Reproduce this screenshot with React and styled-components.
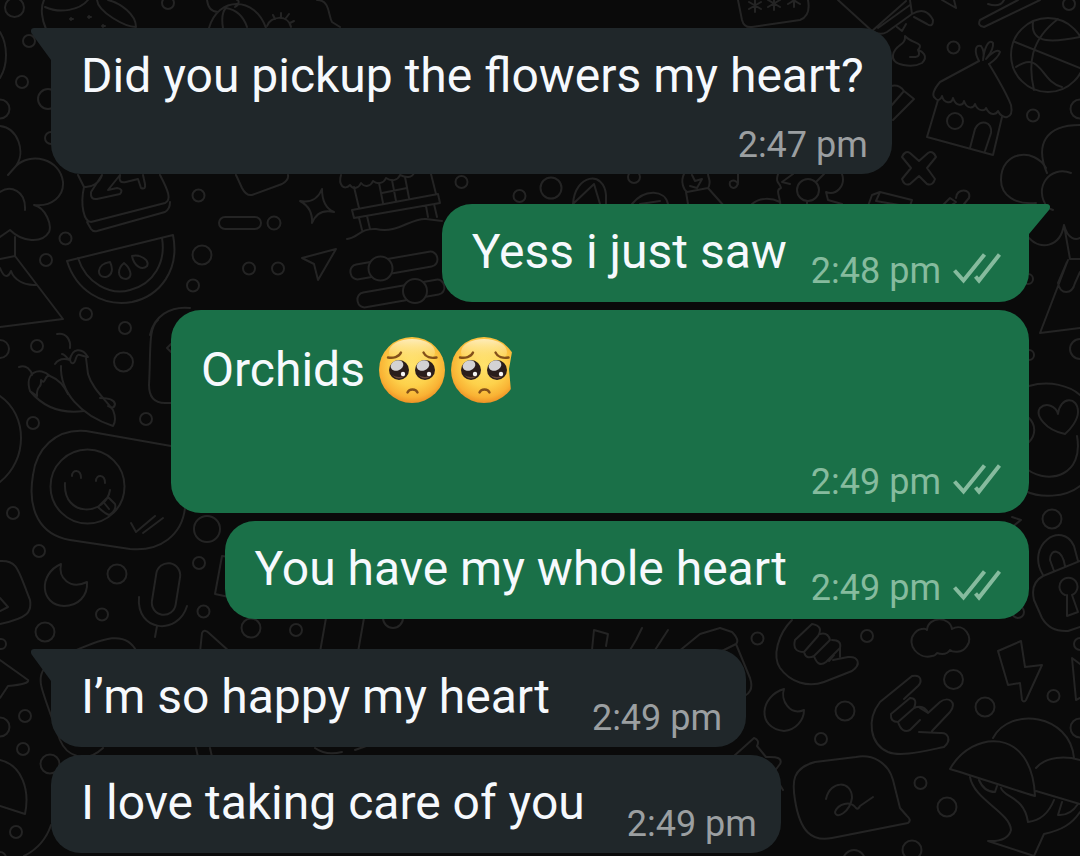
import React, { memo } from "react"
import styled, { createGlobalStyle } from "styled-components"

const palette = {
  page: "#0a0a0a",
  doodle: "#242424",
  incoming: "#20272a",
  outgoing: "#1a7048",
  text: "#f6f9fd",
  metaIn: "#9b9fa1",
  metaOut: "#86bb9e",
}

const GlobalStyle = createGlobalStyle`
  body {
    margin: 0;
    background: ${palette.page};
    font-family: Roboto, "Noto Sans", sans-serif;
  }
`

const Page = styled.main`
  position: relative;
  min-height: 100vh;
  box-sizing: border-box;
  padding: 28px 51px 2px;
  overflow: hidden;
`

const Wallpaper = styled.svg`
  position: absolute;
  top: 0;
  left: 0;
  width: 100%;
  height: 100%;
  fill: none;
  stroke: ${palette.doodle};
  stroke-width: 2;
  stroke-linecap: round;
  stroke-linejoin: round;
`

const Thread = styled.div`
  position: relative;
  display: flex;
  flex-direction: column;
  gap: 30px;
`

const Group = styled.ul`
  display: flex;
  flex-direction: column;
  align-items: ${(props) => (props.$mine ? "flex-end" : "flex-start")};
  gap: 8px;
  margin: 0;
  padding: 0;
  list-style: none;
`

const Bubble = styled.li`
  position: relative;
  display: flex;
  flex-direction: ${(props) => (props.$stacked ? "column" : "row")};
  justify-content: space-between;
  column-gap: ${(props) => (props.$mine ? 24 : 42)}px;
  row-gap: 6px;
  box-sizing: border-box;
  width: ${(props) => (props.$wide ? "100%" : "auto")};
  max-width: 858px;
  min-height: ${(props) => (props.$wide ? 203 : 98)}px;
  padding: 20px ${(props) => (props.$mine ? 28 : 24)}px 8px 30px;
  border-radius: 30px;
  border-top-left-radius: ${(props) => (props.$tail && !props.$mine ? 0 : 30)}px;
  border-top-right-radius: ${(props) => (props.$tail && props.$mine ? 0 : 30)}px;
  background: ${(props) => (props.$mine ? palette.outgoing : palette.incoming)};
`

const Tail = styled.svg`
  position: absolute;
  top: 0;
  width: 22px;
  height: 34px;
  ${(props) => (props.$mine ? "left: 100%; margin-left: -1px;" : "right: 100%; margin-right: -1px;")}
  fill: ${(props) => (props.$mine ? palette.outgoing : palette.incoming)};
`

const Text = styled.p`
  display: flex;
  align-items: center;
  margin: 0;
  padding-right: ${(props) => (props.$stacked ? 4 : 0)}px;
  padding-bottom: 14px;
  height: ${(props) => (props.$tall ? 80 : 56)}px;
  font-size: 48px;
  line-height: 56px;
  color: ${palette.text};
  white-space: pre;
`

const Emojis = styled.span`
  display: flex;
  gap: 6px;
  margin-left: 14px;
`

const Meta = styled.div`
  display: flex;
  align-items: center;
  gap: 12px;
  align-self: flex-end;
  padding-bottom: ${(props) => (props.$mine ? 2 : 0)}px;
  font-size: 36px;
  line-height: 42px;
  color: ${(props) => (props.$mine ? palette.metaOut : palette.metaIn)};
  white-space: nowrap;
`

const Ticks = styled.svg`
  width: 48px;
  height: 36px;
  fill: none;
  stroke: currentColor;
  stroke-width: 4;
`

const Face = styled.svg`
  width: 66px;
  height: 66px;
`

function PleadingFace({ id, cut }) {
  return (
    <Face viewBox="0 0 66 66" role="img" aria-label="pleading face">
      <defs>
        <radialGradient id={`skin-${id}`} cx="0.5" cy="0.42" r="0.58">
          <stop offset="0" stopColor="#ffe36c" />
          <stop offset="0.55" stopColor="#fdd14b" />
          <stop offset="0.85" stopColor="#f9b234" />
          <stop offset="1" stopColor="#ee9226" />
        </radialGradient>
        <linearGradient id={`shine-${id}`} x1="0" y1="0" x2="0" y2="1">
          <stop offset="0" stopColor="#fff6d8" stopOpacity="0.8" />
          <stop offset="1" stopColor="#ffe27a" stopOpacity="0" />
        </linearGradient>
        <clipPath id={`cut-${id}`}>
          <path d={cut ? "M0 0H66L61 15L58 32L60 54L60 66H0Z" : "M0 0H66V66H0Z"} />
        </clipPath>
      </defs>
      <g clipPath={`url(#cut-${id})`}>
        <circle cx="33" cy="33" r="33" fill={`url(#skin-${id})`} />
        <ellipse cx="33" cy="15" rx="23" ry="13" fill={`url(#shine-${id})`} />
        <g fill="none" stroke="#83501a" strokeWidth="2.4" strokeLinecap="round">
          <path d="M9 20.500C14 21.500 20 20 22 15.500" />
          <path d="M44.500 15.500C46.500 20 52 21.500 57.500 20.500" />
          <path d="M28.500 55.500C30 51.500 37 51.500 38.500 55.500" />
        </g>
        {[20, 46].map((x) => (
          <g key={x}>
            <circle cx={x} cy="33" r="10" fill="#2a1d1b" />
            <path d={`M${x - 7} 38Q${x} 45 ${x + 7} 38Q${x} 42 ${x - 7} 38Z`} fill="#6b4a3c" />
            <ellipse
              cx={x - 2}
              cy="28.500"
              rx="6.500"
              ry="5"
              fill="#d3d2d4"
              transform={`rotate(-20 ${x - 2} 28.500)`}
            />
            <circle cx={x + 4} cy="37" r="2.200" fill="#f6f6f6" />
          </g>
        ))}
      </g>
    </Face>
  )
}

// [cx, cy, r]
const bubbles = [
  [14.5, 7.5, 9.5], [168, 3, 6], [29, 41, 6], [22, 82, 6], [0, 109, 9.5], [51, 138, 6], [48, 99, 10],
  [198.5, 195.5, 6], [65.5, 238.5, 6], [46, 260, 6], [202, 255, 9.5], [193, 285.5, 6],
  [86, 314, 6], [125, 328, 6], [249, 268.5, 6], [278, 268.5, 6], [274, 223, 6.5],
  [0, 349, 9], [37, 346, 6], [123.5, 362, 9.5], [33, 423, 6], [146, 419, 6], [13, 513, 6],
  [39, 551, 6], [207, 529, 13], [117, 574, 9.5], [199, 563, 6], [203.5, 611.5, 6],
  [102, 614.5, 6], [45, 632, 9.5], [1, 644, 5], [251, 628, 9.5], [296, 630, 6],
  [393, 618, 10], [25, 716, 6], [0, 727, 9.5], [23, 749, 6], [50, 764, 9.5], [16, 832, 6],
  [0, 858, 6], [461.5, 182, 6], [519.5, 196, 6], [551, 188, 10.5], [634, 177, 6],
  [953.5, 47.5, 6], [1069, 4, 6], [1033, 115.5, 6], [1080, 109, 9.5], [1028, 279, 5],
  [1029, 355, 5], [1080, 349, 10], [1052, 519, 9.5], [1018, 612, 6], [757.5, 638.5, 6],
  [867, 636, 6], [953.5, 679.5, 9.5], [845, 711, 9.5], [821, 739, 6], [985, 707, 9.5],
  [1053.5, 696, 6], [1080, 644, 6], [1080, 728, 9.5], [920.5, 783, 6], [947, 807, 9.5],
  [912, 850, 9.5], [854, 861, 11],
]

const doodles = [
  // pot, leaf and dots
  "M44 0C40 8 42 20 46 29M45 7C60 14 80 10 88 0M97 0C98 12 125 27 136 27C136 14 120 3 108 0",
  "M70 19h3M88 17h3M102 26h3M71 18v2M89 16v2M103 25v2",
  // beach ball and eye
  "M209 28C218 -4 255 -4 266 28M223 28C221 16 224 10 226 8C238 10 244 18 247 27M207 0C208 8 212 12 218 12M235 7C240 4 239 0 237 0",
  "M267 26C270 16 288 14 291 27M275 19L273 15M281 17V13M286 18L289 14M290 23L294 21M317 0C330 0 328 15 332 22L340 27",
  // cloud tree on the left
  "M0 32C8 45 8 65 0 78M0 126C18 128 26 152 16 166L8 175M16 166C30 152 60 158 63 182C64 196 52 207 34 205C46 208 52 225 49 232C42 244 22 242 10 230L0 237M0 192C10 185 26 190 25 210",
  "M15 237V256L63 319L0 327M0 259L15 256M0 268C4 278 8 278 11 271C14 280 25 286 36 285",
  // calendar cake
  "M78 175L84 187C80 205 84 222 91 222L165 203C172 200 168 190 160 175M87 222L91 229Q93 232 97 231L165 212Q170 209 170 202M84 187C92 188 100 182 102 175M102 175L91 192Q90 200 97 199L120 194Q124 189 117 188L108 190L120 175M120 175Q118 184 126 182L138 179L141 188Q146 190 145 184L143 175",
  // tray and star
  "M236 175L242 188Q246 196 252 195L282 184Q289 180 288 175",
  "M300 201Q316 204 322 189Q322 207 334 212Q318 208 312 223Q313 208 300 201Z",
  "M302 258L336 249L318 280L314 264Z",
  // watermelon
  "M67 261L173 235C180 270 160 296 132 302C102 307 76 290 67 261ZM78 258C86 283 110 296 130 290C154 284 166 262 162 238",
  "M110 262C113 268 113 275 106 277C96 278 96 264 110 262ZM124 263C130 268 134 277 126 279C116 278 118 268 124 263ZM132 256C140 254 150 260 147 266C142 271 134 266 132 256Z",
  // market stall
  "M341 175C338 185 344 191 350 185C353 190 359 188 361 183C365 188 371 186 373 181C378 185 384 183 386 178C392 182 398 180 400 175C406 178 412 178 414 173",
  "M354 187L359 208M379 183L383 203M392 180L396 201M405 177L409 198M431 174L436 194M382 193L407 188M352 210L438 194L440 203L354 218ZM359 218L362 230M367 216L370 229M426 206L428 217M434 204L437 217M347 239C358 238 360 228 376 229C398 234 410 218 426 219L442 221",
  // chillies
  "M57 334C66 332 71 340 70 348M55 364C59 358 64 358 70 360C72 348 82 347 88 357C80 356 78 352 76 358C74 366 70 364 70 358C68 362 66 354 62 354M61 366C60 392 80 415 113 426Q117 420 113 410C104 398 92 388 88 374L86 358",
  "M19 367C26 364 31 370 32 375M30 391C24 372 40 366 50 376C44 374 46 386 41 380C42 390 36 384 37 396L30 391C44 408 62 414 84 411M50 376C60 380 64 386 68 394M100 398Q114 398 115 404Q114 410 108 406",
  // card and large arc
  "M158 320C148 328 151 350 149 385Q149 403 165 403H172M171 344L167 348L171 352M0 396C28 415 28 460 0 482M190 308C170 306 154 316 150 335",
  // chat bubble with smiley
  "M171 446L86 431C55 428 36 450 33 475C27 510 40 535 70 540L130 549C160 552 182 535 185 508",
  "M72 476C72 469 81 469 81 478M96 481C96 474 105 474 105 483M65 483C63 518 106 516 110 490M98 507L108 497L115 504Q117 510 109 515Q104 513 98 507M105 504L109 509",
  "M131 523L136 532L155 516M143 533L163 518",
  // play button, moon, microphone
  "M0 561C18 560 18 570 30 600C32 612 28 618 0 624M0 598L8 607L0 611",
  "M61 564C38 574 40 605 64 606C78 606 88 596 87 582C70 590 58 578 61 564Z",
  "M139 597C136 632 178 636 187 606M157 626L155 637M229 557L222 556L215 594L229 597",
  // lower left
  "M72 652C100 640 125 628 137 652M200 652L202 633Q204 628 210 634L230 652M326 618L320 652M364 618L358 652",
  "M0 660L28 680Q30 684 8 686L0 698M44 669C36 680 42 690 60 740C66 755 85 765 103 748M0 760C22 765 30 790 25 814L0 806M51 825C46 840 36 850 24 856M196 748L198 757M210 748L212 757M315 748Q326 756 342 752M355 750L372 744",
  // strip under the first message
  "M573 204C575 174 604 170 606 195V204M574 203L594 184L600 204M632 204C645 188 665 190 668 204M640 204L660 201",
  "M684 174C680 182 684 190 687 192L708 188C712 182 708 178 708 174M686 192L688 204M708 188L724 206M692 175L695 181L702 179L697 188L690 186M738 174V183C736 191 728 188 730 182C733 179 737 181 738 184",
  "M778 174C775 184 780 182 781 188C774 190 782 200 780 206M752 204C760 197 772 198 780 202M790 184L782 182L793 174M816 182L824 174M842 174C846 186 836 196 826 192L828 200L842 204M807 202V206",
  "M868 206L872 195L880 192L912 200L910 206M880 192L876 201L905 206M942 206L950 198L956 202L950 206M956 198C956 188 972 188 969 198L964 204",
  // password field
  "M738 0L742 20Q744 28 752 27L800 20Q811 16 808 0",
  "M755 -1V12M749 2L761 9M761 2L749 9M774 -3V10M768 0L780 7M780 0L768 7M794 -6V7M788 -3L800 4M800 -3L788 4",
  // torch, cursor and pencil
  "M838 0L872 31Q880 36 887 32L912 14L910 0M872 31L906 1M878 28L910 5M912 14Q926 6 933 20Q933 28 927 24L914 17M897 27L902 31L906 24M942 0L956 8L954 0M1040 0L984 27Q977 26 980 20L1018 0M1004 0Q1000 8 988 4",
  "M905 36C906 46 895 44 893 55C891 66 913 68 922 63C929 56 922 51 918 50C925 42 912 44 905 36ZM918 50C922 58 914 57 910 57",
  // basketball
  "M1011 55a37 37 0 1 0 74 0a37 37 0 1 0 -74 0M1015 42L1080 68M1033 22C1030 45 1055 42 1080 37M1058 19C1030 40 1028 65 1034 90M1016 67C1042 50 1040 82 1062 87",
  // hut
  "M979 61L940 82Q930 94 935 98C938 102 941 99 942 96C944 104 952 104 953 98C956 107 963 106 964 101C967 110 974 108 975 104C978 112 985 111 986 108C990 116 996 115 998 111C1002 120 1014 120 1011 105Q1006 92 989 64",
  "M979 61C974 52 975 44 981 46C984 50 984 56 983 60C984 50 988 38 993 43C994 50 988 56 986 59C990 54 998 48 1000 52Q998 58 989 64M938 100L927 137L993 155L1002 117M947 121a8 8 0 1 0 16 0a8 8 0 1 0 -16 0M970 148L975 129C980 118 993 122 991 133L985 151M891 86Q899 84 904 91L914 99L893 120M904 91L891 106",
  // cross
  "M902 157Q905 150 910 153L919 161L928 153Q933 150 936 157L927 168L935 179Q933 186 927 184L919 176L910 184Q904 186 902 179L911 168Z",
  // tree on the right
  "M1047 173C1035 145 1045 125 1080 125M1046 168C1035 148 1001 150 1001 180C1001 195 1015 205 1036 203M1071 173C1050 165 1032 188 1048 208L1053 210M1029 238C1040 250 1060 248 1064 225L1070 259H1080M1064 225C1068 240 1076 240 1080 238M1068 260L1040 333L1080 328M1067 262L1058 283C1060 295 1072 295 1075 283L1080 272",
  // face with heart eyes
  "M1029 386C1050 380 1070 386 1080 395M1065 434C1045 430 1035 415 1040 408C1046 402 1056 406 1058 414C1060 396 1078 396 1078 412C1078 420 1070 430 1065 434ZM1028 470C1050 485 1084 475 1077 436M1025 491C1040 498 1065 498 1080 486M1029 418C1036 425 1036 435 1029 442M1012 517L1021 520L1012 527",
  // lock
  "M1080 561L1043 576Q1030 583 1034 600L1042 618Q1050 632 1068 631L1080 627M1043 575C1025 545 1062 520 1074 546L1078 561M1054 571L1050 560C1050 548 1062 548 1065 566M1065 595a9 9 0 1 1 7 0L1078 612L1067 616L1067 595",
  // hands
  "M792 620C778 634 772 656 780 668C790 682 808 688 824 682L852 671C862 664 858 656 848 657L833 660",
  "M812 624L795 640Q792 652 804 652L818 636Q824 626 812 624M804 652Q806 660 814 656L830 640Q828 632 820 634M814 656Q818 668 826 662L840 648Q842 640 832 640M840 648L840 657M834 655L829 661",
  "M912 676L880 702C866 720 870 744 888 752C900 757 920 752 944 747C952 740 948 732 940 733L919 732M932 731L950 712C958 702 948 696 940 702L928 713L920 708M912 676C922 674 922 682 918 686L904 699M910 698L891 714Q890 722 898 722L914 708Q918 698 910 698M898 722Q902 734 910 730L920 720M914 708Q924 704 928 713",
  // cloud and bolt
  "M932 656C918 660 906 644 914 634C918 628 926 628 927 630C928 616 950 616 952 629C964 622 974 638 967 646C962 654 952 652 950 650C946 656 940 654 937 653Q935 656 932 656Z",
  "M998 651L1021 641L1025 667L1042 665L1026 700Q1024 703 1022 700L1020 683L1008 685ZM1080 664L1072 658L1076 700L1080 698",
  "M784 689C760 696 756 728 784 731C796 730 804 720 804 710C790 716 780 700 784 689Z",
  // bottle and bone behind the incoming messages
  "M720 628L732 632Q740 640 736 644L720 652M736 644L750 678Q754 690 746 695M734 756L754 738Q760 740 757 746L766 757Q784 756 780 764L774 772M780 785L783 790",
  "M594 630L592 650M594 630L608 634L606 646M630 650L636 640L642 628M655 650L668 630M678 652L700 634L720 628",
  // speech bubble with signature
  "M815 762C792 768 792 782 795 800C800 832 812 842 832 838L908 823Q912 820 907 816L900 808L893 780C888 762 872 754 856 757Z",
  "M826 799C830 780 852 780 852 798C850 812 836 820 835 812C838 804 850 800 856 808Q858 810 860 806L873 797",
  // mushrooms
  "M950 769C972 730 1032 726 1035 796C1008 788 980 778 950 769ZM993 738C1010 706 1070 714 1074 758M1036 768C1046 756 1066 756 1080 760M1036 791L1080 804",
  "M970 777C974 800 1010 812 1011 830Q1008 842 988 841L1034 856L1044 834C1062 830 1072 824 1080 812M979 780Q984 792 995 792L997 786M1001 788C1004 798 1024 796 1028 822Q1046 820 1054 800M1062 802L1058 815Q1070 816 1078 804",
]

const messages = [
  {
    mine: false,
    items: [{ text: "Did you pickup the flowers my heart?", time: "2:47 pm", stacked: true }],
  },
  {
    mine: true,
    items: [
      { text: "Yess i just saw", time: "2:48 pm" },
      { text: "Orchids", emojis: 2, time: "2:49 pm", stacked: true, wide: true },
      { text: "You have my whole heart", time: "2:49 pm" },
    ],
  },
  {
    mine: false,
    items: [
      { text: "I’m so happy my heart", time: "2:49 pm" },
      { text: "I love taking care of you", time: "2:49 pm" },
    ],
  },
]

function Background() {
  return (
    <Wallpaper viewBox="0 0 1080 856" preserveAspectRatio="xMinYMin slice" aria-hidden="true">
      {bubbles.map(([cx, cy, r]) => (
        <circle key={`${cx}-${cy}`} cx={cx} cy={cy} r={r} />
      ))}
      {doodles.map((d) => (
        <path key={d} d={d} />
      ))}
      <circle cx="87.500" cy="486.500" r="37" />
      <circle cx="808" cy="190" r="11" />
      <rect x="219" y="217" width="42" height="12" rx="6" />
      <rect x="350" y="258" width="88" height="15" rx="7" transform="rotate(-10 394 266)" />
      <rect x="357" y="286" width="88" height="15" rx="7" transform="rotate(-10 401 294)" />
      <rect x="154" y="563" width="24" height="52" rx="12" transform="rotate(9 166 589)" />
      <g fill={palette.page}>
        <circle cx="380.500" cy="268.500" r="12" />
        <circle cx="415" cy="291" r="12" />
      </g>
    </Wallpaper>
  )
}

function Message({ item, mine, tail }) {
  return (
    <Bubble $mine={mine} $tail={tail} $stacked={item.stacked} $wide={item.wide}>
      {tail && (
        <Tail $mine={mine} viewBox="0 0 22 34" aria-hidden="true">
          <path
            d={
              mine
                ? "M0 0H19C22 0 23 3 21 6L1 30V34H0Z"
                : "M22 0H4C1 0 0 3 2 6L21 32V34H22Z"
            }
          />
        </Tail>
      )}
      <Text $stacked={item.stacked} $tall={item.emojis > 0}>
        {item.text}
        {item.emojis && (
          <Emojis>
            {Array.from({ length: item.emojis }, (_, i) => (
              <PleadingFace key={i} id={i} cut={i === item.emojis - 1} />
            ))}
          </Emojis>
        )}
      </Text>
      <Meta $mine={mine}>
        <time>{item.time}</time>
        {mine && (
          <Ticks viewBox="0 0 48 36" role="img" aria-label="Delivered">
            <path d="M1.500 17.500L10.500 27.500L31.500 1.500M22.500 23.500L26 27.500L46.500 1.500" />
          </Ticks>
        )}
      </Meta>
    </Bubble>
  )
}

function App() {
  return (
    <>
      <GlobalStyle />
      <Page>
        <Background />
        <Thread>
          {messages.map((group, i) => (
            <Group key={i} $mine={group.mine}>
              {group.items.map((item, j) => (
                <Message key={item.text} item={item} mine={group.mine} tail={j === 0} />
              ))}
            </Group>
          ))}
        </Thread>
      </Page>
    </>
  )
}

export default memo(App)
